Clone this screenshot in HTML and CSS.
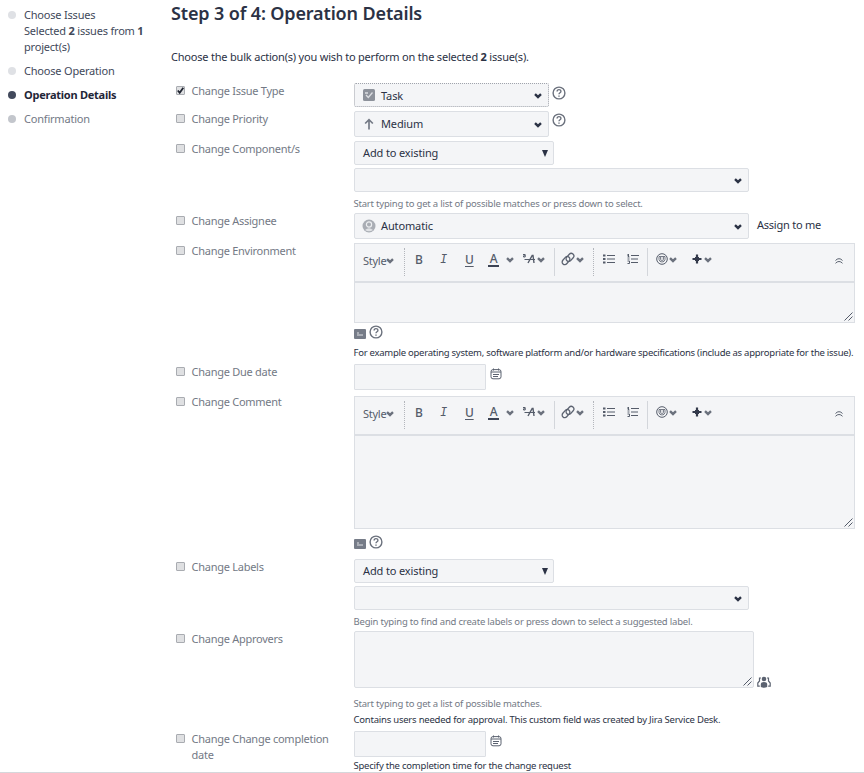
FILE: index.html
```
<!DOCTYPE html>
<html lang="en">
<head>
<meta charset="utf-8">
<title>Bulk Operation</title>
<link rel="stylesheet" href="styles.css">
</head>
<body>
<svg class="sprite" aria-hidden="true">
  <symbol id="chev" viewBox="0 0 8 6"><path d="M1 1.2 L4 4 L7 1.2" fill="none" stroke="currentColor" stroke-width="2.4"/></symbol>
  <symbol id="help" viewBox="0 0 14 14"><circle cx="7" cy="7" r="5.9" fill="none" stroke="currentColor" stroke-width="1.4"/><path d="M5.1 5.5 C5.1 3 8.9 3 8.9 5.4 C8.9 6.8 7 6.8 7 8.3 M7 9.5 V10.8" fill="none" stroke="currentColor" stroke-width="1.4"/></symbol>
  <symbol id="cal" viewBox="0 0 12 12"><rect x="1" y="1.6" width="10" height="9.2" rx="2" fill="none" stroke="currentColor"/><path d="M3.5 .5 V2.5 M8.5 .5 V2.5 M1 4 H11 M3 6.5 H9 M3 8.5 H8" fill="none" stroke="currentColor"/></symbol>
  <symbol id="super" viewBox="0 0 15 12"><path d="M1 1.5 H3.2 V4 H1.5 V2.8 H3.2 M2.5 6.5 H13" fill="none" stroke="currentColor"/><path d="M6 10 L10.2 2.5 H11 L12 10" fill="none" stroke="currentColor" stroke-width="1.4"/></symbol>
  <symbol id="link" viewBox="0 0 14 14"><g fill="none" stroke="currentColor" stroke-width="1.3" transform="rotate(-48 7 7)"><rect x="0" y="4" width="9" height="5.2" rx="2.6"/><rect x="5" y="4.8" width="9" height="5.2" rx="2.6"/></g></symbol>
  <symbol id="ul" viewBox="0 0 12 10"><path d="M0 1.5 H2.5 M0 5 H2.5 M0 8.5 H2.5" stroke="currentColor" stroke-width="2"/><path d="M4 1.5 H12 M4 5 H12 M4 8.5 H12" stroke="currentColor"/></symbol>
  <symbol id="ol" viewBox="0 0 12 10"><path d="M1.5 0 V3 M0 1 H1.5 M.5 3 H2.5 M.5 5 H2.5 M.5 7 H2.5 V9.5 H.5" fill="none" stroke="currentColor"/><path d="M4 1.5 H12 M4 5 H11 M4 8.5 H11" stroke="currentColor"/></symbol>
  <symbol id="smile" viewBox="0 0 12 12"><circle cx="6" cy="6" r="5.3" fill="none" stroke="currentColor"/><path d="M3 3.5 H9 V6.5 Q8.5 9 6 9 Q3.5 9 3 6.5 Z M4 6.5 Q6 8.5 8 6.5" fill="none" stroke="currentColor" stroke-width=".8"/><path d="M4.6 4.2 V5.8 M7.4 4.2 V5.8" stroke="currentColor" stroke-width="1.2"/></symbol>
  <symbol id="plus" viewBox="0 0 10 10"><path d="M5 .5 V9.5 M.5 5 H9.5" stroke="currentColor" stroke-width="2.2"/><rect x="3" y="3" width="4" height="4" fill="currentColor"/></symbol>
  <symbol id="up2" viewBox="0 0 8 6"><path d="M.5 2.5 Q2 .7 4 .7 Q6 .7 7.5 2.5 M.5 5.3 Q2 3.5 4 3.5 Q6 3.5 7.5 5.3" fill="none" stroke="currentColor"/></symbol>
  <symbol id="grip" viewBox="0 0 9 9"><path d="M.5 8.5 L8.5 .5 M4.5 8.5 L8.5 4.5" stroke="currentColor"/></symbol>
  <symbol id="preview" viewBox="0 0 12 10"><rect width="12" height="10" rx="1" fill="currentColor"/><path d="M3 4 H5 M3 6 H9" stroke="#dfe1e5"/></symbol>
  <symbol id="task" viewBox="0 0 12 12"><rect width="12" height="12" rx="1.5" fill="#8d929b"/><path d="M2 4 H5 M3 6 L5.3 8.5 L9.5 3.5" fill="none" stroke="#dcdee2" stroke-width="1.3"/></symbol>
  <symbol id="arrow" viewBox="0 0 10 10"><path d="M5 9.5 V1.5 M1.8 4.6 L5 1.4 L8.2 4.6" fill="none" stroke="currentColor" stroke-width="1.4"/></symbol>
  <symbol id="avatar" viewBox="0 0 14 14"><circle cx="7" cy="7" r="6.5" fill="#a9adb4"/><circle cx="7" cy="5.5" r="2.6" fill="#a9adb4" stroke="#eceef0" stroke-width="1.2"/><path d="M3 11 Q7 7.7 11 11 Q7 13.5 3 11 Z" fill="#e0e2e5"/></symbol>
  <symbol id="people" viewBox="0 0 14 12"><circle cx="7" cy="3" r="2.3" fill="currentColor"/><path d="M3.8 11 V8 Q4 6 7 6 Q10 6 10.2 8 V11 Q7 12.4 3.8 11 Z" fill="currentColor"/><path d="M4 2 H2.5 V5 L.8 7 V10.2 H2.8 M10 2 H11.5 V5 L13.2 7 V10.2 H11.2" fill="none" stroke="currentColor" stroke-width="1.2"/></symbol>
  <symbol id="check" viewBox="0 0 9 9"><path d="M1.8 4.5 L3.7 6.8 L7.3 1.8" fill="none" stroke="#1f2430" stroke-width="1.8"/></symbol>
</svg>

<div class="page">
  <nav class="steps">
    <div class="step done"><i class="dot"></i><div>Choose Issues<br>Selected <b>2</b> issues from <b>1</b><br>project(s)</div></div>
    <div class="step done"><i class="dot"></i><div>Choose Operation</div></div>
    <div class="step current"><i class="dot"></i><div>Operation Details</div></div>
    <div class="step todo"><i class="dot"></i><div>Confirmation</div></div>
  </nav>

  <main class="main">
    <h1>Step 3 of 4: Operation Details</h1>
    <p class="intro">Choose the bulk action(s) you wish to perform on the selected <b>2</b> issue(s).</p>

    <div class="row r-type">
      <label class="label"><span class="box"><svg><use href="#check"/></svg></span><span>Change Issue Type</span></label>
      <div class="field line"><div class="pick small focus"><svg class="i12"><use href="#task"/></svg><span>Task</span><svg class="chev"><use href="#chev"/></svg></div><svg class="help"><use href="#help"/></svg></div>
    </div>
    <div class="row r-priority">
      <label class="label"><span class="box"></span><span>Change Priority</span></label>
      <div class="field line"><div class="pick small tall"><svg class="i12"><use href="#arrow"/></svg><span>Medium</span><svg class="chev"><use href="#chev"/></svg></div><svg class="help"><use href="#help"/></svg></div>
    </div>
    <div class="row r-component">
      <label class="label"><span class="box"></span><span>Change Component/s</span></label>
      <div class="field"><div class="pick native"><span>Add to existing</span><i class="tri"></i></div><div class="pick wide second"><svg class="chev"><use href="#chev"/></svg></div><p class="hint">Start typing to get a list of possible matches or press down to select.</p></div>
    </div>
    <div class="row r-assignee">
      <label class="label"><span class="box"></span><span>Change Assignee</span></label>
      <div class="field line"><div class="pick wide tall"><svg class="i14"><use href="#avatar"/></svg><span>Automatic</span><svg class="chev"><use href="#chev"/></svg></div><span class="assign">Assign to me</span></div>
    </div>
    <div class="row r-env">
      <label class="label"><span class="box"></span><span>Change Environment</span></label>
      <div class="field">
        <div class="editor">
          <div class="bar"><div class="g style"><span>Style</span><svg class="chev"><use href="#chev"/></svg></div><div class="g text"><b class="t">B</b><i class="t it">I</i><span class="t un">U</span><span class="t col">A</span><svg class="chev"><use href="#chev"/></svg><svg class="sup"><use href="#super"/></svg><svg class="chev"><use href="#chev"/></svg></div><div class="g lk"><svg class="i14"><use href="#link"/></svg><svg class="chev"><use href="#chev"/></svg></div><div class="g lists"><svg class="list"><use href="#ul"/></svg><svg class="list"><use href="#ol"/></svg></div><div class="g more"><svg class="i12"><use href="#smile"/></svg><svg class="chev"><use href="#chev"/></svg><svg class="plus"><use href="#plus"/></svg><svg class="chev"><use href="#chev"/></svg></div><svg class="up"><use href="#up2"/></svg></div>
          <div class="area"><svg class="grip"><use href="#grip"/></svg></div>
        </div>
        <div class="tools"><svg class="preview"><use href="#preview"/></svg><svg class="help"><use href="#help"/></svg></div>
        <p class="desc long">For example operating system, software platform and/or hardware specifications (include as appropriate for the issue).</p>
      </div>
    </div>
    <div class="row r-due">
      <label class="label"><span class="box"></span><span>Change Due date</span></label>
      <div class="field line"><div class="date"></div><svg class="cal"><use href="#cal"/></svg></div>
    </div>
    <div class="row r-comment">
      <label class="label"><span class="box"></span><span>Change Comment</span></label>
      <div class="field">
        <div class="editor large">
          <div class="bar"><div class="g style"><span>Style</span><svg class="chev"><use href="#chev"/></svg></div><div class="g text"><b class="t">B</b><i class="t it">I</i><span class="t un">U</span><span class="t col">A</span><svg class="chev"><use href="#chev"/></svg><svg class="sup"><use href="#super"/></svg><svg class="chev"><use href="#chev"/></svg></div><div class="g lk"><svg class="i14"><use href="#link"/></svg><svg class="chev"><use href="#chev"/></svg></div><div class="g lists"><svg class="list"><use href="#ul"/></svg><svg class="list"><use href="#ol"/></svg></div><div class="g more"><svg class="i12"><use href="#smile"/></svg><svg class="chev"><use href="#chev"/></svg><svg class="plus"><use href="#plus"/></svg><svg class="chev"><use href="#chev"/></svg></div><svg class="up"><use href="#up2"/></svg></div>
          <div class="area"><svg class="grip"><use href="#grip"/></svg></div>
        </div>
        <div class="tools"><svg class="preview"><use href="#preview"/></svg><svg class="help"><use href="#help"/></svg></div>
      </div>
    </div>
    <div class="row r-labels">
      <label class="label"><span class="box"></span><span>Change Labels</span></label>
      <div class="field"><div class="pick native"><span>Add to existing</span><i class="tri"></i></div><div class="pick wide second"><svg class="chev"><use href="#chev"/></svg></div><p class="hint">Begin typing to find and create labels or press down to select a suggested label.</p></div>
    </div>
    <div class="row r-approvers">
      <label class="label"><span class="box"></span><span>Change Approvers</span></label>
      <div class="field"><div class="line end"><div class="area approvers"><svg class="grip"><use href="#grip"/></svg></div><svg class="people"><use href="#people"/></svg></div><p class="hint">Start typing to get a list of possible matches.</p><p class="desc">Contains users needed for approval. This custom field was created by Jira Service Desk.</p></div>
    </div>
    <div class="row r-completion">
      <label class="label"><span class="box"></span><span>Change Change completion date</span></label>
      <div class="field"><div class="line"><div class="date"></div><svg class="cal"><use href="#cal"/></svg></div><p class="desc last">Specify the completion time for the change request</p></div>
    </div>
  </main>
</div>
</body>
</html>
```

FILE: styles.css
```
* { box-sizing: border-box; }
body { margin: 0; background: #fff; color: #2b3245; font: 11px/16px "Noto Sans", sans-serif; letter-spacing: -.2px; }
svg { display: block; flex: none; }
p, h1 { margin: 0; white-space: nowrap; }
.sprite { position: absolute; width: 0; height: 0; }

.page { display: grid; grid-template-columns: 171px 1fr; height: 773px; overflow: hidden; border-bottom: 1px solid #d5d7db; }

.steps { display: flex; flex-direction: column; gap: 8px; padding: 7px 0 0 8px; white-space: nowrap; }
.step { display: flex; gap: 8px; color: #42495a; }
.dot { flex: none; width: 8px; height: 8px; margin-top: 4px; border-radius: 50%; background: #dfe1e5; }
.current { color: #1f2638; font-weight: 700; letter-spacing: -.25px; }
.current .dot { background: #42495c; }
.todo { color: #737985; }
.todo .dot { background: #c3c6cc; }

h1 { height: 28px; font-size: 18px; line-height: 26px; font-weight: 600; letter-spacing: -.14px; }
.intro { height: 16px; margin: 21px 0 18px; }

.row { display: grid; grid-template-columns: 183px 1fr; }
.label { display: flex; gap: 6.5px; padding: 0 20px 0 5px; color: #737985; letter-spacing: -.26px; }
.box { flex: none; width: 9px; height: 9px; margin-top: 3px; border: 1px solid #a9acb1; border-radius: 1px; background: #dfe0e2; }
.box svg { width: 9px; height: 9px; margin: -1px; }
.line { display: flex; align-items: flex-start; }
.end { align-items: flex-end; }

.r-type { height: 28px; }
.r-priority { height: 30px; }
.r-component { height: 72px; }
.r-assignee { height: 30px; }
.r-env { height: 121px; }
.r-due { height: 32px; }
.r-comment { height: 163px; }
.r-comment .label { margin-top: -2px; }
.r-labels { height: 72px; }
.r-approvers { height: 100px; }

.pick { display: flex; align-items: center; height: 24px; padding: 0 6px 0 8px; border: 1px solid #dcdfe4; border-radius: 2px; background: #f4f5f7; letter-spacing: -.13px; }
.pick .chev { margin: 2px 0 0 auto; color: #2b3245; }
.small { width: 195px; }
.wide { width: 395px; }
.tall { height: 26px; }
.native { width: 200px; padding-right: 5px; }
.second { margin-top: 3px; }
.focus { border: 1px dotted #a0a4ac; }
.focus span { margin-top: 2px; }
.tri { margin-left: auto; border: 3.5px solid transparent; border-top: 7px solid #2b3245; border-bottom: 0; }
.chev { width: 8px; height: 6px; margin-top: 1px; color: #6b717d; }
.i12 { width: 12px; height: 12px; margin-right: 6px; color: #747a86; }
.i14 { width: 14px; height: 14px; margin: 0 5px 0 -1px; color: #5b6270; }
.help { width: 14px; height: 14px; color: #6b717d; }
.line > .help { margin: 3px 0 0 3px; }
.r-priority .help { margin-top: 2px; }
.hint { margin: 4px 0 0 -.5px; font-size: 9.5px; color: #737985; }
.desc { margin-left: -.5px; font-size: 9.5px; letter-spacing: -.22px; }
.long { letter-spacing: -.255px; }
.last { margin-top: 1px; }
.assign { margin: 4px 0 0 8px; letter-spacing: -.24px; }

.editor { width: 501px; }
.bar { display: flex; height: 40px; padding: 4px 11px 0 8px; border: 1px solid #dcdfe4; border-bottom-width: 2px; background: #f4f5f7; }
.g { display: flex; align-items: center; height: 28px; padding-bottom: 6px; color: #555c6a; }
.g + .g { border-left: 1px dotted #b3b6bc; }
.g + .lk, .g + .more { border-left: 1px solid #d3d6db; }
.style { width: 41px; padding-bottom: 3px; letter-spacing: -.25px; }
.style .chev { margin-top: 0; }
.text { width: 150px; padding-left: 10px; }
.t { width: 25px; font-size: 12px; font-weight: 500; line-height: 13px; }
.it { margin-top: 2px; font-family: "Liberation Mono", monospace; }
.un { width: 23px; text-decoration: underline; text-underline-offset: 2px; }
.col { width: 11px; margin-right: 7px; border-bottom: 2px solid #3c4354; text-align: center; }
.sup { width: 15px; height: 12px; margin-left: 8px; }
.lk { width: 39px; padding-left: 7px; }
.lk .i14 { margin-right: 1px; }
.lists { width: 54px; gap: 12px; padding-left: 9px; }
.list { width: 12px; height: 10px; margin-top: -1px; }
.more { padding-left: 8px; }
.more .i12 { margin-right: 1px; color: inherit; }
.plus { width: 10px; height: 10px; margin: 0 2px 0 15px; color: #333a4b; }
.up { width: 8px; height: 6px; margin: 10px 0 0 auto; color: #5b6270; }
.area { display: flex; align-items: flex-end; justify-content: flex-end; height: 40px; padding: 1px; border: 1px solid #dcdfe4; border-top: 0; background: #f4f5f7; }
.large .area { height: 93px; }
.grip { width: 9px; height: 9px; color: #555c6a; }
.tools { display: flex; gap: 3px; height: 22px; padding-top: 2px; }
.large + .tools { padding-top: 6px; }
.preview { width: 12px; height: 10px; margin-top: 4px; color: #767c88; }
.date { width: 132px; height: 26px; border: 1px solid #dcdfe4; border-radius: 1px; background: #f4f5f7; }
.cal { width: 12px; height: 12px; margin: 4px 0 0 4px; color: #5b6270; }
.area.approvers { width: 400px; height: 57px; border-top: 1px solid #dcdfe4; border-radius: 2px; }
.approvers + .people { width: 14px; height: 12px; margin-left: 3px; color: #5b6270; }
.r-approvers .hint { margin-top: 8px; }
```
